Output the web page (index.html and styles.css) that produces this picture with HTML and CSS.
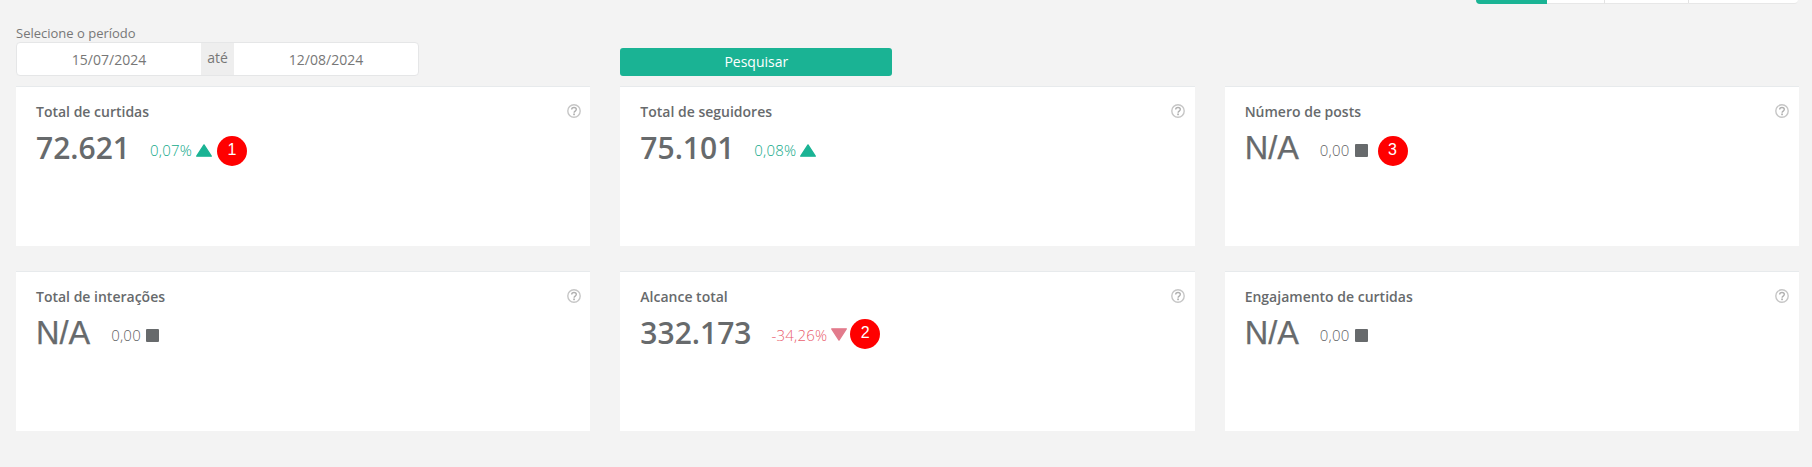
FILE: index.html
```html
<!DOCTYPE html>
<html lang="pt-BR">
<head>
<meta charset="utf-8">
<title>Painel</title>
<link rel="stylesheet" href="styles.css">
</head>
<body>
<svg class="defs" width="0" height="0" aria-hidden="true">
  <symbol id="help" viewBox="0 0 14 14">
    <circle cx="7" cy="7" r="6.2" fill="none" stroke="#c6c6c6" stroke-width="1.4"/>
    <path d="M4.7 5.6c0-1.4 1.1-2.1 2.3-2.1s2.3.8 2.3 2c0 1.6-2.2 1.6-2.2 3.2" fill="none" stroke="#b0b0b0" stroke-width="1.4"/>
    <rect x="6.2" y="9.5" width="1.7" height="1.7" fill="#b0b0b0"/>
  </symbol>
  <symbol id="tri-up" viewBox="0 0 16 13">
    <path d="M8 .9 15.3 12.2H.7Z" fill="currentColor" stroke="currentColor" stroke-width="1.3" stroke-linejoin="round"/>
  </symbol>
  <symbol id="tri-down" viewBox="0 0 16 13">
    <path d="M8 12.1 15.3.8H.7Z" fill="currentColor" stroke="currentColor" stroke-width="1.3" stroke-linejoin="round"/>
  </symbol>
</svg>
<div class="page">
  <div class="range-bar">
    <div class="seg seg-active"></div>
    <div class="seg seg-a"></div>
    <div class="seg seg-b"></div>
    <div class="seg seg-c"></div>
  </div>

  <div class="grid filters">
    <div class="period">
      <label class="period-label">Selecione o período</label>
      <div class="input-group">
        <div class="date">15/07/2024</div>
        <div class="addon">até</div>
        <div class="date">12/08/2024</div>
      </div>
    </div>
    <div class="search-cell">
      <button class="search" type="button">Pesquisar</button>
    </div>
  </div>

  <div class="grid cards">
    <section class="card">
      <svg class="help"><use href="#help"/></svg>
      <h5 class="title">Total de curtidas</h5>
      <div class="stat">
        <span class="value">72.621</span>
        <span class="delta up">0,07%</span><svg class="tri up"><use href="#tri-up"/></svg>
        <span class="badge">1</span>
      </div>
    </section>
    <section class="card">
      <svg class="help"><use href="#help"/></svg>
      <h5 class="title">Total de seguidores</h5>
      <div class="stat">
        <span class="value">75.101</span>
        <span class="delta up">0,08%</span><svg class="tri up"><use href="#tri-up"/></svg>
      </div>
    </section>
    <section class="card">
      <svg class="help"><use href="#help"/></svg>
      <h5 class="title">Número de posts</h5>
      <div class="stat">
        <span class="value na">N/A</span>
        <span class="delta flat">0,00</span><span class="square"></span>
        <span class="badge">3</span>
      </div>
    </section>
    <section class="card">
      <svg class="help"><use href="#help"/></svg>
      <h5 class="title">Total de interações</h5>
      <div class="stat">
        <span class="value na">N/A</span>
        <span class="delta flat">0,00</span><span class="square"></span>
      </div>
    </section>
    <section class="card">
      <svg class="help"><use href="#help"/></svg>
      <h5 class="title">Alcance total</h5>
      <div class="stat">
        <span class="value">332.173</span>
        <span class="delta down">-34,26%</span><svg class="tri down"><use href="#tri-down"/></svg>
        <span class="badge badge-raised">2</span>
      </div>
    </section>
    <section class="card">
      <svg class="help"><use href="#help"/></svg>
      <h5 class="title">Engajamento de curtidas</h5>
      <div class="stat">
        <span class="value na">N/A</span>
        <span class="delta flat">0,00</span><span class="square"></span>
      </div>
    </section>
  </div>
</div>
</body>
</html>
```

FILE: styles.css
```css
* { box-sizing: border-box; }
html, body { margin: 0; padding: 0; }
body {
  background: #f3f3f3;
  color: #676a6c;
  font-family: "Open Sans", "Noto Sans", sans-serif;
  font-size: 13px;
  height: 467px;
  overflow: hidden;
}
.defs { position: absolute; }
.page { padding: 0 13px 0 16px; }

.range-bar {
  display: flex;
  justify-content: flex-end;
  height: 4px;
  margin-right: 1px;
}
.seg { height: 4px; background: #fff; border-bottom: 1px solid #e7e7e7; border-left: 1px solid #e3e3e3; }
.seg-active { width: 71px; background: #1ab394; border: 0; border-radius: 0 0 0 4px; }
.seg-a { width: 57px; border-left: 0; }
.seg-b { width: 84px; }
.seg-c { width: 110px; border-radius: 0 0 4px 0; }

.grid {
  display: grid;
  grid-template-columns: repeat(3, 1fr);
  column-gap: 30px;
}
.filters { height: 82px; align-items: end; padding-bottom: 10px; }
.period-label { display: block; font-size: 13px; line-height: 18px; color: #777; }
.input-group {
  display: flex;
  width: 403px;
  height: 34px;
  border: 1px solid #e5e6e7;
  border-radius: 4px;
  background: #fff;
  overflow: hidden;
}
.date {
  flex: 1;
  text-align: center;
  font-size: 14px;
  line-height: 33px;
  color: #777;
}
.addon {
  width: 33px;
  background: #eee;
  text-align: center;
  font-size: 14px;
  line-height: 30px;
  color: #777;
}
.search {
  display: block;
  width: 272px;
  height: 28px;
  border: 0;
  border-radius: 3px;
  background: #1ab394;
  color: #fff;
  font: 400 14px/28px "Open Sans", sans-serif;
  padding: 0;
}

.cards { row-gap: 25px; }
.card {
  position: relative;
  height: 160px;
  background: #fff;
  border-top: 1px solid #e7eaec;
  padding: 15px 20px 0;
}
.title {
  margin: 0;
  font-size: 14px;
  font-weight: 600;
  line-height: 20px;
  color: #676a6c;
}
.help { position: absolute; top: 17px; right: 9.5px; width: 14px; height: 14px; }
.stat { display: flex; align-items: center; height: 30px; margin-top: 14px; }
.value { font-size: 30px; font-weight: 600; line-height: 30px; color: #676a6c; margin: 0 20px 6px 0; }
.value.na { font-family: "Liberation Sans", Arial, sans-serif; font-weight: 400; font-size: 32.5px; margin-right: 21px; -webkit-text-stroke: 0.25px #676a6c; }
.delta { font-size: 15px; font-weight: 300; letter-spacing: 0.2px; line-height: 20px; color: #5f6264; margin: 0 4px 2px 0; }
.delta.flat { margin-right: 5px; }
.delta.up { color: #12a98a; }
.delta.down { color: #ea5f6f; }
.tri { width: 16px; height: 13px; margin-bottom: 1px; }
.tri.up { color: #1ab394; }
.tri.down { color: #e27b8c; margin-bottom: 3px; }
.square { width: 13px; height: 13px; margin-bottom: 1px; background: #676a6c; border-radius: 1px; }
.badge {
  width: 30px;
  height: 30px;
  margin-left: 5px;
  border-radius: 50%;
  background: #f00;
  color: #fff;
  font: 400 16px/28px "Liberation Sans", Arial, sans-serif;
  text-align: center;
}
.badge-raised { margin: 0 0 4px 3px; }
.square + .badge { margin-left: 10px; }
```
